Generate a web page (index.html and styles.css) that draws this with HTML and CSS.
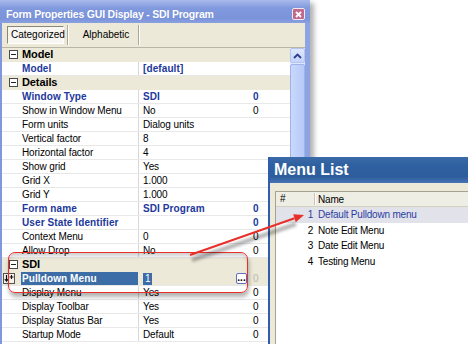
FILE: index.html
```html
<!DOCTYPE html>
<html lang="en">
<head>
  <meta charset="UTF-8" />
  <title>Form Properties - Menu List</title>
  <link rel="stylesheet" href="styles.css">
</head>
<body>
  <div class="desk">

    <div class="win">
      <div class="titlebar">
        <span class="title">Form Properties GUI Display - SDI Program</span>
        <span class="close">
          <svg width="7" height="7" viewBox="0 0 7 7"><path d="M1 1L6 6M6 1L1 6" stroke="#fff" stroke-width="1.8"/></svg>
        </span>
      </div>
      <div class="frame">
        <div class="toolbar">
          <span class="tbtn pressed">Categorized</span>
          <span class="sep"></span>
          <span class="tbtn wide">Alphabetic</span>
          <span class="sep"></span>
        </div>
        <div class="grid">
          <div class="props">
            <div class="row cat"><span class="gut"><i class="box"></i></span><span class="name">Model</span></div>
            <div class="row"><span class="gut"></span><span class="name key">Model</span><span class="val key">[default]</span><span class="num"></span></div>
            <div class="row cat"><span class="gut"><i class="box"></i></span><span class="name">Details</span></div>
            <div class="row"><span class="gut"></span><span class="name key">Window Type</span><span class="val key">SDI</span><span class="num key">0</span></div>
            <div class="row"><span class="gut"></span><span class="name">Show in Window Menu</span><span class="val">No</span><span class="num">0</span></div>
            <div class="row"><span class="gut"></span><span class="name">Form units</span><span class="val">Dialog units</span><span class="num"></span></div>
            <div class="row"><span class="gut"></span><span class="name">Vertical factor</span><span class="val">8</span><span class="num"></span></div>
            <div class="row"><span class="gut"></span><span class="name">Horizontal factor</span><span class="val">4</span><span class="num"></span></div>
            <div class="row"><span class="gut"></span><span class="name">Show grid</span><span class="val">Yes</span><span class="num"></span></div>
            <div class="row"><span class="gut"></span><span class="name">Grid X</span><span class="val">1.000</span><span class="num"></span></div>
            <div class="row"><span class="gut"></span><span class="name">Grid Y</span><span class="val">1.000</span><span class="num"></span></div>
            <div class="row"><span class="gut"></span><span class="name key">Form name</span><span class="val key">SDI Program</span><span class="num key">0</span></div>
            <div class="row"><span class="gut"></span><span class="name key">User State Identifier</span><span class="val"></span><span class="num key">0</span></div>
            <div class="row"><span class="gut"></span><span class="name">Context Menu</span><span class="val">0</span><span class="num">0</span></div>
            <div class="row"><span class="gut"></span><span class="name">Allow Drop</span><span class="val">No</span><span class="num">0</span></div>
            <div class="row cat"><span class="gut"><i class="box"></i></span><span class="name">SDI</span></div>
            <div class="row cur">
              <span class="gut">
                <svg class="link" width="12" height="11" viewBox="0 0 12 11">
                  <rect x="0.5" y="0.5" width="11" height="10" fill="#f4f2e8" stroke="#555"/>
                  <path d="M3.5 2v6M1.8 6.2l1.7 2 1.7-2M6.5 4h4M8.5 2v4" stroke="#111" stroke-width="1.1" fill="none"/>
                </svg>
              </span>
              <span class="name">Pulldown Menu</span>
              <span class="val"><b class="hl">1</b><span class="dots">...</span></span>
              <span class="num dim">0</span>
            </div>
            <div class="row"><span class="gut"></span><span class="name">Display Menu</span><span class="val">Yes</span><span class="num">0</span></div>
            <div class="row"><span class="gut"></span><span class="name">Display Toolbar</span><span class="val">Yes</span><span class="num">0</span></div>
            <div class="row"><span class="gut"></span><span class="name">Display Status Bar</span><span class="val">Yes</span><span class="num">0</span></div>
            <div class="row"><span class="gut"></span><span class="name">Startup Mode</span><span class="val">Default</span><span class="num">0</span></div>
          </div>
          <div class="vscroll">
            <div class="sb-up">
              <svg width="9" height="6" viewBox="0 0 9 6"><path d="M1 5L4.5 1.5 8 5" stroke="#2c3f8c" stroke-width="1.8" fill="none"/></svg>
            </div>
            <div class="sb-thumb"><i class="grip"></i></div>
          </div>
        </div>
      </div>
    </div>

    <div class="callout"></div>

    <div class="mwin">
      <div class="mtitle">Menu List</div>
      <div class="mbody">
        <div class="list">
          <div class="lhead"><span class="hnum">#</span><span class="hname">Name</span></div>
          <div class="lrow sel"><span class="n">1</span><span class="t">Default Pulldown menu</span></div>
          <div class="lrow"><span class="n">2</span><span class="t">Note Edit Menu</span></div>
          <div class="lrow"><span class="n">3</span><span class="t">Date Edit Menu</span></div>
          <div class="lrow"><span class="n">4</span><span class="t">Testing Menu</span></div>
        </div>
      </div>
    </div>

    <svg class="arrow" width="468" height="344" viewBox="0 0 468 344">
      <defs>
        <filter id="soft" x="-10%" y="-50%" width="120%" height="200%">
          <feGaussianBlur stdDeviation="1.6"/>
        </filter>
      </defs>
      <path d="M192 260L296 224" stroke="#000" stroke-opacity="0.3" stroke-width="4" filter="url(#soft)"/>
      <path d="M190 255L294.5 218.2" stroke="#e8302a" stroke-width="2"/>
      <polygon points="304,215 295.8,222.2 293.2,214.2" fill="#e8302a"/>
    </svg>

  </div>
</body>
</html>
```

FILE: styles.css
```css
* {
  box-sizing: border-box;
}

body {
  margin: 0;
  font-family: 'Liberation Sans', Arial, sans-serif;
  font-size: 10px;
  color: #000;
  background: #fff;
}

.desk {
  position: relative;
  width: 468px;
  height: 344px;
  overflow: hidden;
  background: #fff;
}

/* main property window */
.win {
  position: absolute;
  left: 0;
  top: 0;
  width: 310px;
  height: 360px;
  display: flex;
  flex-direction: column;
  box-shadow: 4px 3px 5px rgba(0, 0, 0, 0.3);
}

.titlebar {
  height: 23px;
  display: flex;
  align-items: center;
  justify-content: space-between;
  padding: 5px 5px 0 6px;
  background: linear-gradient(#a9bbec, #8199dd 35%, #7a93da 80%, #8aa0df);
}

.title {
  color: #fff;
  font-size: 10.5px;
  font-weight: bold;
  letter-spacing: -0.2px;
  text-shadow: 0 0 1px #6a80c8;
}

.close {
  width: 13px;
  height: 12px;
  display: flex;
  align-items: center;
  justify-content: center;
  background: #c1698a;
  border: 1px solid #f2e8f0;
  border-radius: 2px;
}

.frame {
  flex: 1;
  display: flex;
  flex-direction: column;
  border-left: 2px solid #7f97dc;
  border-right: 5px solid #8ea3e2;
  background: #ece9d8;
}

.toolbar {
  height: 25px;
  display: flex;
  align-items: center;
  padding-left: 5px;
  border-bottom: 1px solid #b9b6a6;
}

.tbtn {
  height: 18px;
  line-height: 16px;
  width: 57px;
  text-align: center;
  border: 1px solid transparent;
}

.tbtn.wide {
  width: 64px;
  padding-left: 6px;
}

.pressed {
  border-color: #8a877a #fff #fff #8a877a;
  background: #f7f6f0;
  padding-left: 3px;
}

.sep {
  width: 2px;
  height: 20px;
  margin: 0 2px 0 3px;
  border-left: 1px solid #aca899;
  border-right: 1px solid #fff;
}

.grid {
  flex: 1;
  display: flex;
}

.props {
  width: 288px;
  background: #fff;
}

.row {
  height: 14px;
  display: flex;
  align-items: center;
  border-bottom: 1px solid #e8e8e8;
  white-space: nowrap;
  letter-spacing: -0.1px;
}

.gut {
  width: 19px;
  height: 100%;
  display: flex;
  align-items: center;
  padding-left: 7px;
}

.name {
  width: 118px;
  height: 100%;
  line-height: 13px;
  padding-left: 1px;
  border-right: 1px solid #d8d8d8;
}

.val {
  width: 111px;
  height: 100%;
  line-height: 13px;
  padding-left: 4px;
  display: flex;
  align-items: center;
}

.num {
  flex: 1;
  line-height: 13px;
  padding-left: 3px;
}

.key {
  color: #22389c;
  font-weight: bold;
  letter-spacing: 0.1px;
}

.cat {
  background: #ece9d8;
  border-bottom-color: #ece9d8;
}

.cat .name {
  font-weight: bold;
  font-size: 11px;
  border-right: none;
  width: auto;
}

.box {
  width: 9px;
  height: 9px;
  border: 1px solid #4a4a4a;
  background: linear-gradient(#222, #222) center / 5px 1px no-repeat, #fff;
}

.cur {
  background: #ece9d8;
}

.cur .gut {
  padding-left: 1px;
}

.cur .name {
  background: #3c6da6;
  color: #fff;
  font-weight: bold;
  letter-spacing: 0.1px;
  border-right-color: #ece9d8;
}

.hl {
  background: #3c6da6;
  color: #fff;
  font-weight: normal;
  padding: 0 2px;
  line-height: 12px;
}

.dots {
  margin-left: auto;
  margin-right: 3px;
  width: 11px;
  height: 11px;
  line-height: 7px;
  text-align: center;
  letter-spacing: 0;
  font-weight: bold;
  background: #fff;
  border: 1px solid #5d6fc6;
  border-radius: 2px;
}

.dim {
  color: #b8b8b8;
}

.vscroll {
  width: 15px;
  display: flex;
  flex-direction: column;
  background: #dfe6fb;
}

.sb-up {
  height: 15px;
  display: flex;
  align-items: center;
  justify-content: center;
  background: linear-gradient(#e0e8fe, #c3d3fb);
  border: 1px solid #b4c5f2;
  border-radius: 2px;
}

.sb-thumb {
  height: 166px;
  margin-top: 1px;
  display: flex;
  align-items: center;
  justify-content: center;
  background: linear-gradient(90deg, #c9d8fc, #b7caf7);
  border: 1px solid #9eb3ea;
  border-radius: 2px;
}

.grip {
  width: 7px;
  height: 8px;
  background: repeating-linear-gradient(#eef2fe 0 1px, #8ea5e0 1px 2px);
  margin-top: 86px;
}

/* red callout around the selected property */
.callout {
  position: absolute;
  left: 8px;
  top: 252px;
  width: 240px;
  height: 41px;
  border: 1.5px solid #e8302a;
  border-radius: 7px;
  box-shadow: 1px 4px 4px rgba(0, 0, 0, 0.3), inset 0 5px 4px -2px rgba(0, 0, 0, 0.2);
}

.arrow {
  position: absolute;
  left: 0;
  top: 0;
  pointer-events: none;
}

/* menu list window */
.mwin {
  position: absolute;
  left: 268px;
  top: 157px;
  width: 210px;
  height: 200px;
  display: flex;
  flex-direction: column;
  border-left: 2px solid #2f5cae;
  background: #ece9d8;
}

.mtitle {
  height: 26px;
  line-height: 26px;
  padding-left: 4px;
  color: #fff;
  font-size: 16px;
  font-weight: bold;
  background: linear-gradient(#3c6ba9, #2f609f 30%, #2d5d9c 75%, #4673b5);
}

.mbody {
  flex: 1;
  padding: 8px 0 0 5px;
}

.list {
  height: 100%;
  background: #fff;
  border-top: 1px solid #a5a292;
  border-left: 1px solid #a5a292;
  letter-spacing: -0.2px;
}

.lhead {
  height: 15px;
  display: flex;
  align-items: center;
  background: #efeee4;
  border-bottom: 1px solid #d4d0c0;
}

.hnum {
  width: 39px;
  padding-left: 4px;
  border-right: 1px solid #c7c4b3;
  box-shadow: 1px 0 0 #fff;
  line-height: 12px;
}

.hname {
  padding-left: 3px;
}

.lrow {
  height: 15.5px;
  display: flex;
  align-items: center;
}

.lrow .n {
  width: 37px;
  text-align: right;
}

.lrow .t {
  padding-left: 5px;
}

.lrow.sel {
  background: #e2e2ea;
  color: #2a3ea2;
}
```
